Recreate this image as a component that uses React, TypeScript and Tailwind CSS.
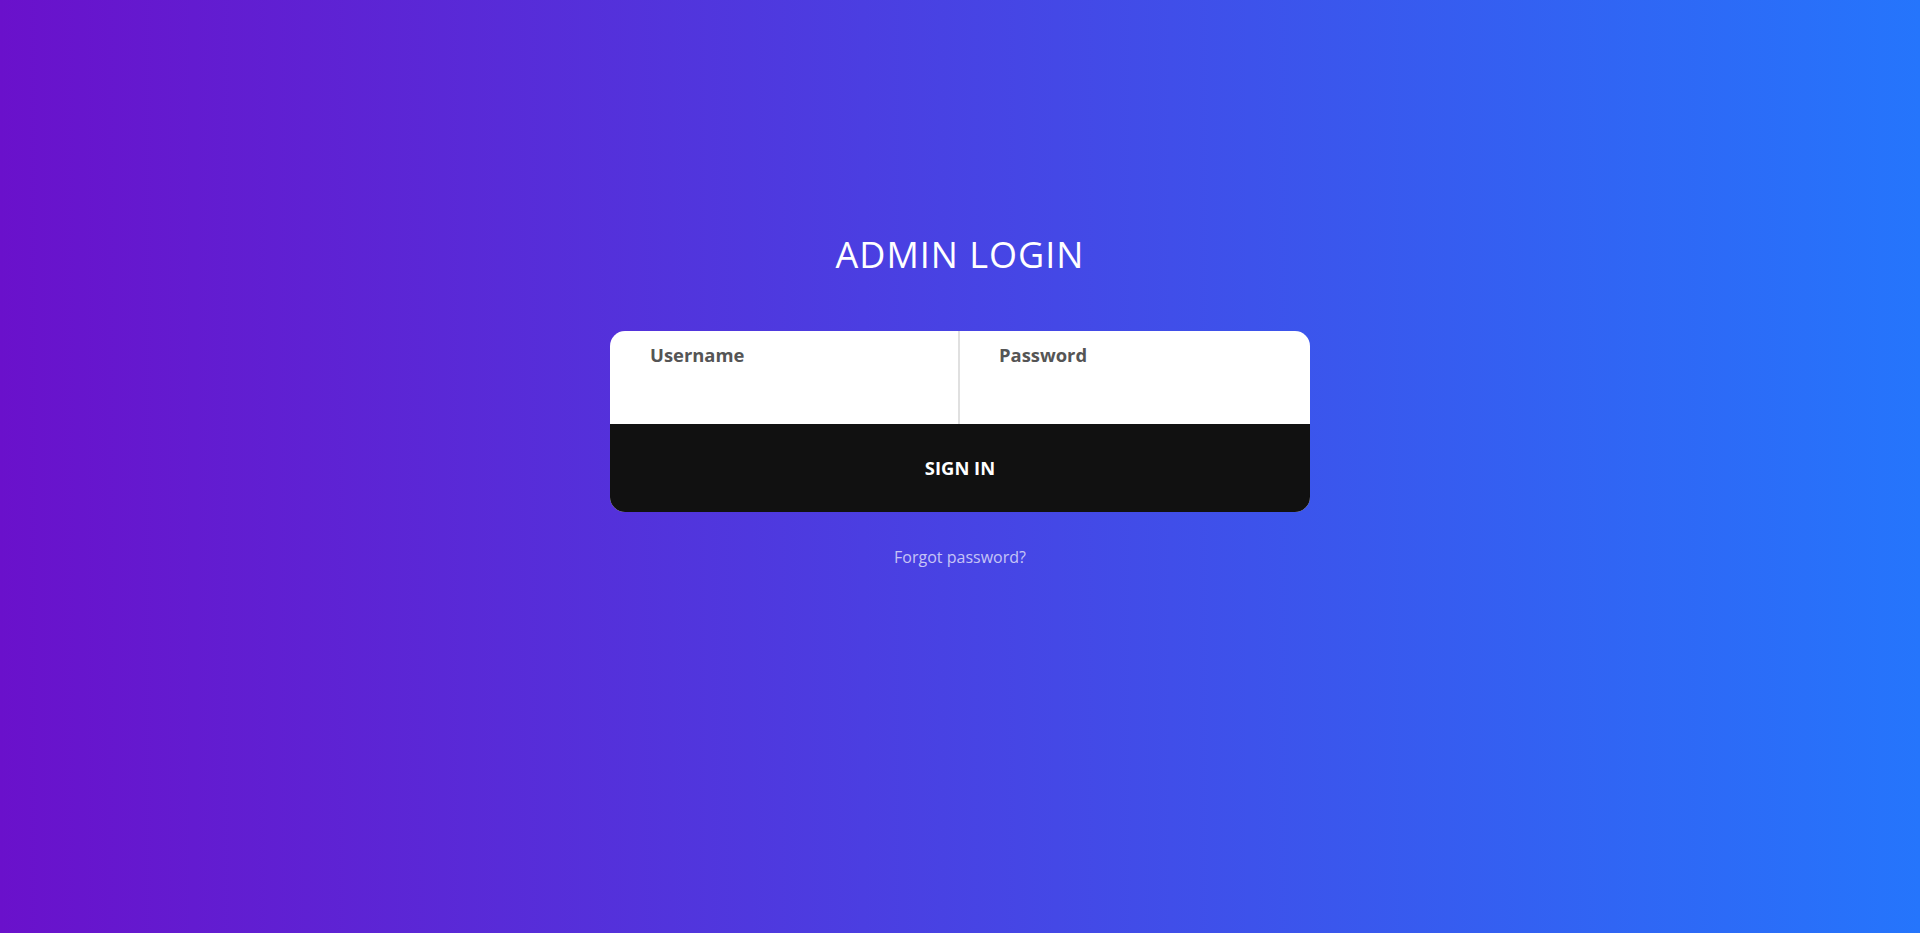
import React from 'react';

const App: React.FC = () => {
  return (
    <div className="min-h-screen w-full bg-[linear-gradient(to_right,#6a11cb,#2575fc)] font-['Open_Sans',sans-serif]">
      <div className="flex flex-col items-center pt-[230px]">
        <h1 className="text-[36px] leading-[49px] font-normal tracking-[1px] text-white">ADMIN LOGIN</h1>

        <form className="mt-[52px] w-[700px] overflow-hidden rounded-[15px] bg-white" onSubmit={(e) => e.preventDefault()}>
          <div className="flex">
            <input
              type="text"
              placeholder="Username"
              className="w-1/2 border-r-2 border-[#e0e0e0] pl-[40px] pt-[10px] pb-[56px] text-[18.4px] leading-[27px] font-bold text-[#555] outline-none placeholder:text-[#555]"
            />
            <input
              type="password"
              placeholder="Password"
              className="w-1/2 pl-[39px] pt-[10px] pb-[56px] text-[18.4px] leading-[27px] font-bold text-[#555] outline-none placeholder:text-[#555]"
            />
          </div>
          <button type="submit" className="block h-[88px] w-full bg-[#111111] text-[18.4px] font-bold text-white">
            SIGN IN
          </button>
        </form>

        <a href="#" className="mt-[34px] text-[16px] leading-[22px] text-white/70">
          Forgot password?
        </a>
      </div>
    </div>
  );
};

export default App;
